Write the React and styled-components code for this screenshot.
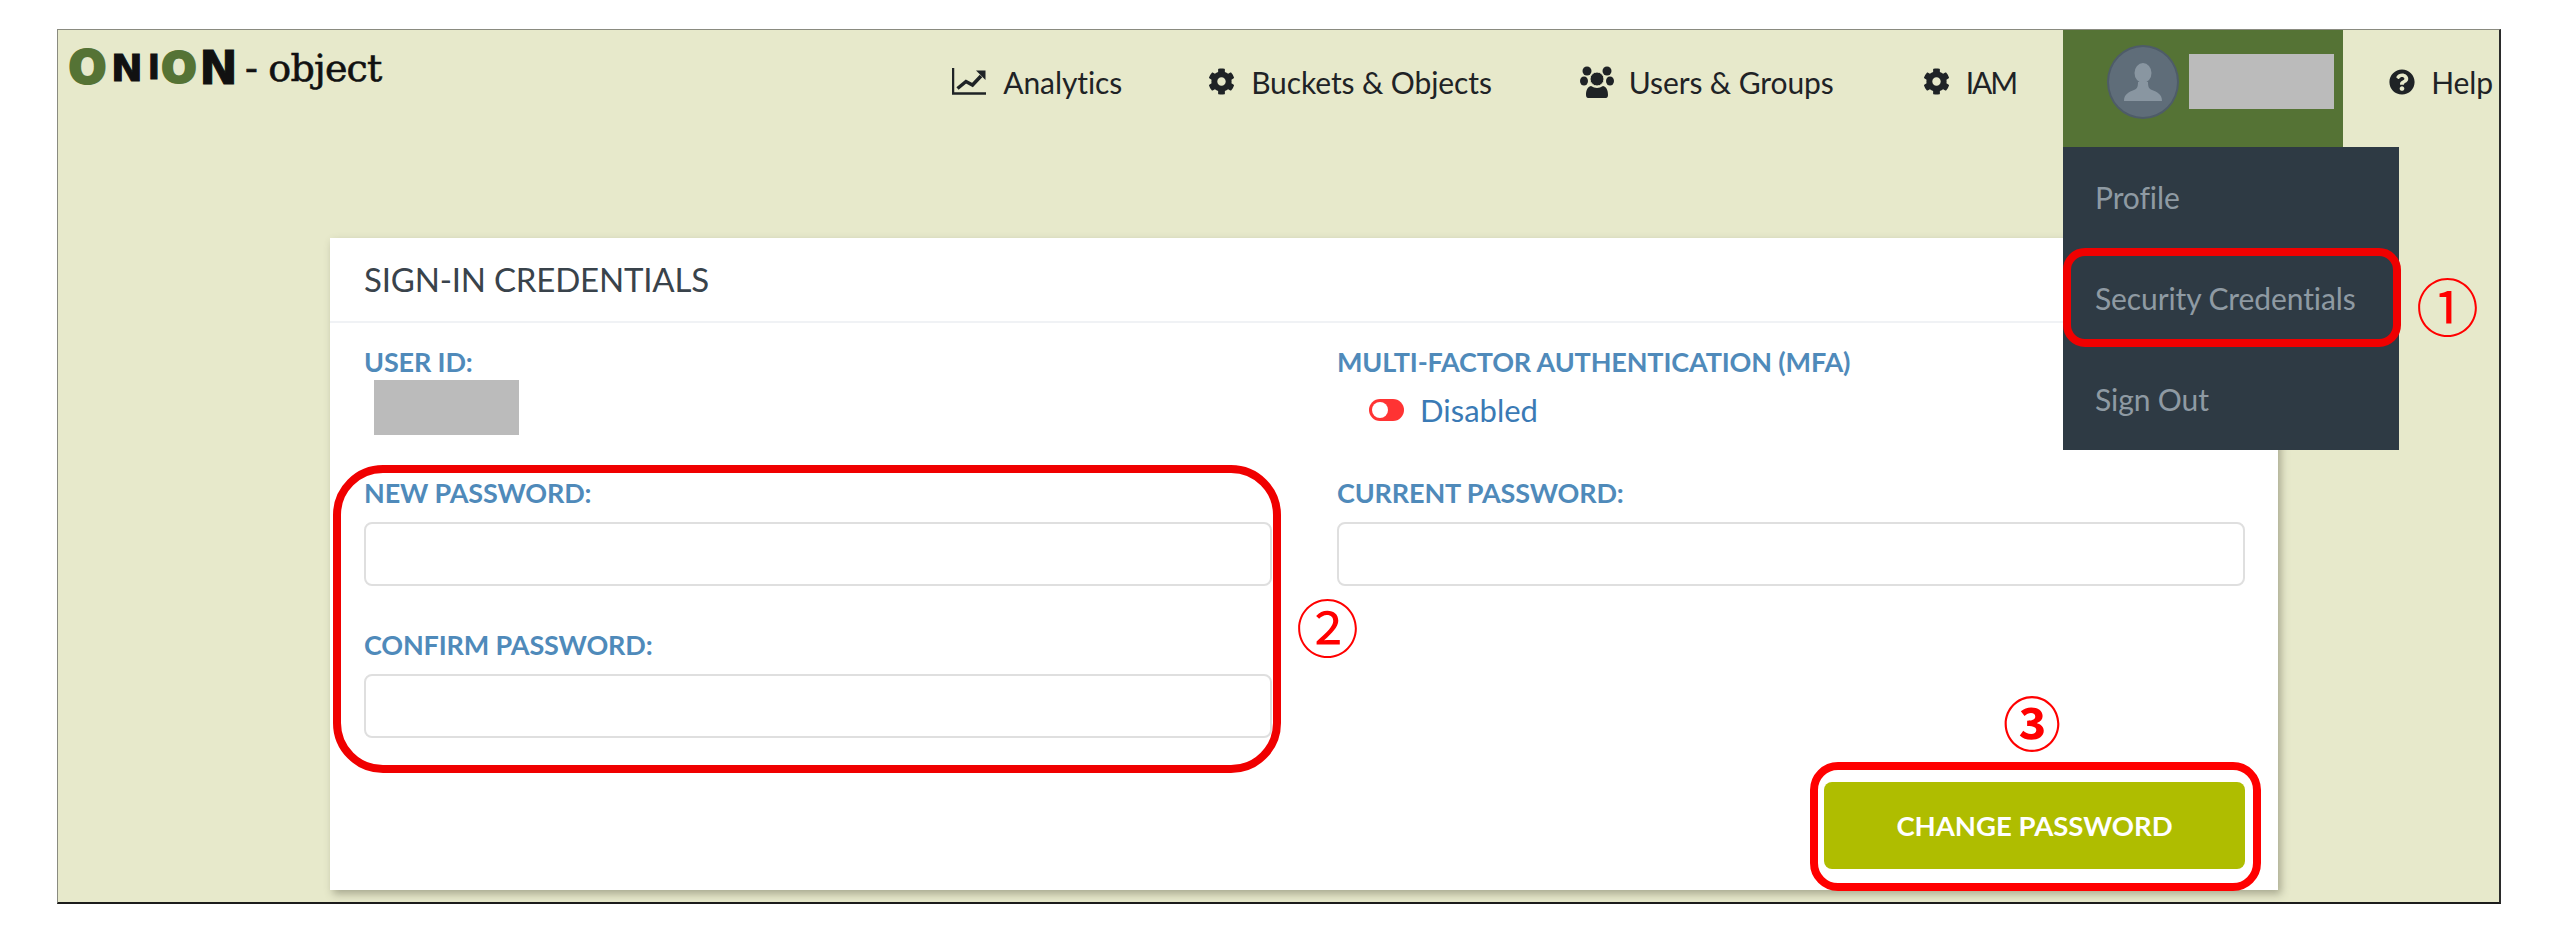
import React from 'react'
import styled, { createGlobalStyle } from 'styled-components'
import { FaCog, FaQuestionCircle } from 'react-icons/fa'

const color = {
  text: '#1f2326',
  paper: '#e7e9cb',
  green: '#557335',
  menu: '#2e3a44',
  menuText: '#8f9aa3',
  label: '#4f8aba',
  link: '#3a7ab5',
  redact: '#bbbbbb',
  red: '#f00000',
  lime: '#afbd00',
}

const GlobalStyle = createGlobalStyle`
  html, body {
    margin: 0;
    background: #ffffff;
    font-family: 'Lato', 'Liberation Sans', sans-serif;
  }
  * {
    box-sizing: border-box;
  }
`

const Frame = styled.div`
  position: relative;
  width: 2444px;
  height: 875px;
  margin: 29px 0 0 57px;
  background: ${color.paper};
  border-style: solid;
  border-width: 1px 2px 2px 1px;
  border-color: #8a8b80 #2b2b2b #1c1c1c #8a8b80;
`

const TopBar = styled.header`
  display: flex;
  align-items: center;
  height: 117px;
`

const Logo = styled.div`
  display: flex;
  align-items: center;
  align-self: flex-start;
  height: 36px;
  margin: 20px 0 0 12px;
  color: #111;
  white-space: nowrap;
`

const LogoLetter = styled.span`
  display: flex;
  justify-content: center;
  width: ${p => p.$w}px;
  margin-right: ${p => p.$gap}px;
  font: 700 ${p => p.$size}px/36px 'DejaVu Sans', sans-serif;
  color: ${p => p.$ring ? color.green : '#111'};
  -webkit-text-stroke: ${p => p.$ring ? 3 : 1}px currentColor;
`

const LogoWord = styled.span`
  font: 400 38px/36px 'DejaVu Serif', serif;
  margin-left: 8px;
  letter-spacing: -0.8px;
  -webkit-text-stroke: 0.6px #111;
`

const Nav = styled.nav`
  display: flex;
  align-items: center;
  align-self: stretch;
  margin-left: auto;
  margin-right: 6px;
`

const NavItem = styled.a`
  display: flex;
  align-items: center;
  gap: ${p => p.$gap || 16}px;
  margin-right: ${p => p.$after ?? 89}px;
  margin-bottom: 14px;
  font-size: 30px;
  letter-spacing: ${p => p.$tight ? -2 : -0.1}px;
  color: ${color.text};
  white-space: nowrap;
`

const UserTab = styled.div`
  display: flex;
  align-items: center;
  align-self: stretch;
  width: 280px;
  margin-right: 46px;
  padding: 0 0 14px 44px;
  background: ${color.green};
`

const Avatar = styled.div`
  display: flex;
  align-items: center;
  justify-content: center;
  width: 72px;
  height: 74px;
  margin-right: 10px;
  border: 2px solid #4e5c68;
  border-radius: 50%;
  background: #5f6d79;
  color: #8996a1;
`

const Redacted = styled.div`
  width: ${p => p.$w}px;
  height: 55px;
  background: ${color.redact};
`

const Menu = styled.ul`
  position: absolute;
  top: 117px;
  left: 2005px;
  width: 336px;
  height: 303px;
  margin: 0;
  padding: 0;
  list-style: none;
  background: ${color.menu};
  z-index: 2;
`

const MenuItem = styled.li`
  display: flex;
  align-items: center;
  height: 101px;
  padding: 0 0 2px 32px;
  font-size: 30px;
  letter-spacing: -0.1px;
  color: ${color.menuText};
`

const Card = styled.section`
  width: 1948px;
  height: 652px;
  margin: 91px 0 0 272px;
  background: #ffffff;
  box-shadow: 3px 4px 8px rgba(90, 90, 70, 0.45);
`

const CardHeader = styled.h2`
  display: flex;
  align-items: center;
  height: 85px;
  margin: 0;
  padding: 0 0 2px 34px;
  border-bottom: 2px solid #f0f2f5;
  font-size: 33px;
  font-weight: 400;
  letter-spacing: -0.2px;
  color: #39434b;
`

const CardBody = styled.div`
  display: grid;
  grid-template-columns: 908px 908px;
  column-gap: 65px;
  padding: 22px 0 0 34px;
`

const Column = styled.div`
  display: flex;
  flex-direction: column;
`

const Label = styled.label`
  display: block;
  height: 34px;
  font-size: 27px;
  line-height: 34px;
  font-weight: 700;
  letter-spacing: -0.15px;
  color: ${color.label};
  white-space: nowrap;
`

const UserIdValue = styled(Redacted)`
  margin: 1px 0 41px 10px;
`

const Status = styled.div`
  display: flex;
  align-items: center;
  gap: 16px;
  height: 55px;
  margin: 1px 0 41px 32px;
  padding-top: 4px;
  font-size: 31px;
  color: ${color.link};
`

const Toggle = styled.span`
  display: block;
  position: relative;
  width: 35px;
  height: 22px;
  border-radius: 11px;
  background: #ff3333;
  &::after {
    content: '';
    position: absolute;
    top: 3px;
    left: 3px;
    width: 16px;
    height: 16px;
    border-radius: 50%;
    background: #ffffff;
  }
`

const Input = styled.input`
  display: block;
  width: 100%;
  height: 64px;
  margin: 12px 0 42px;
  border: 2px solid #dfdfdf;
  border-radius: 8px;
  background: #ffffff;
`

const Actions = styled.div`
  display: flex;
  justify-content: flex-end;
  margin-top: 2px;
  padding-right: 33px;
`

const Button = styled.button`
  width: 421px;
  height: 87px;
  border: 0;
  border-radius: 8px;
  background: ${color.lime};
  color: #ffffff;
  font: 700 27.5px 'Lato', sans-serif;
`

// red annotations drawn over the screenshot
const Ring = styled.div`
  position: absolute;
  top: ${p => p.$top}px;
  left: ${p => p.$left}px;
  width: ${p => p.$w}px;
  height: ${p => p.$h}px;
  border: 8px solid ${p => p.$color || color.red};
  border-radius: ${p => p.$radius}px;
  pointer-events: none;
  z-index: 3;
`

const Marker = styled.span`
  position: absolute;
  top: ${p => p.$top}px;
  left: ${p => p.$left}px;
  width: ${p => p.$w}px;
  height: 62px;
  font: ${p => p.$bold ? 700 : 400} ${p => p.$bold ? 58 : 63}px/62px 'Noto Sans CJK JP', sans-serif;
  color: #ff0000;
  text-align: center;
  z-index: 3;
`

const TrendIcon = () => (
  <svg width="34" height="27" viewBox="0 0 34 27">
    <path d="M1 0v25.5h33" fill="none" stroke="currentColor" strokeWidth="2.5" />
    <path d="M5.5 20.5l8.5-7 6.5 3.5L29 8" fill="none" stroke="currentColor" strokeWidth="3.5" />
    <path d="M24 2.5h9.5v9.5z" fill="currentColor" />
  </svg>
)

const UsersIcon = () => (
  <svg width="34" height="32" viewBox="0 0 34 32" fill="currentColor">
    <circle cx="7" cy="5" r="4.5" />
    <circle cx="27" cy="5" r="4.5" />
    <ellipse cx="4" cy="15" rx="4" ry="4.5" />
    <ellipse cx="30" cy="15" rx="4" ry="4.5" />
    <circle cx="17" cy="13" r="7" stroke={color.paper} strokeWidth="1" />
    <path d="M8 32c-1 0-2-1-2-3 0-4 1-8 5-9 2 1 4 2 6 2s4-1 6-2c4 1 5 5 5 9 0 2-1 3-2 3z" />
  </svg>
)

const BustIcon = () => (
  <svg width="38" height="38" viewBox="0 0 38 38" fill="currentColor">
    <ellipse cx="19" cy="10" rx="8.5" ry="10" />
    <path d="M0 38c0-7 5-9 10-11 3-1 4-3 4-8h10c0 5 1 7 4 8 5 2 10 4 10 11z" />
  </svg>
)

function App() {
  return (
    <>
      <GlobalStyle />
      <Frame>
        <TopBar>
          <Logo>
            <LogoLetter $ring $w={35} $gap={7} $size={44}>O</LogoLetter>
            <LogoLetter $w={30} $gap={8} $size={38}>N</LogoLetter>
            <LogoLetter $w={8} $gap={5} $size={33}>I</LogoLetter>
            <LogoLetter $ring $w={32} $gap={5} $size={41}>O</LogoLetter>
            <LogoLetter $w={37} $gap={0} $size={46}>N</LogoLetter>
            <LogoWord>- object</LogoWord>
          </Logo>
          <Nav>
            <NavItem $gap={17} $after={86}><TrendIcon />Analytics</NavItem>
            <NavItem $after={88}><FaCog size={27} />Buckets &amp; Objects</NavItem>
            <NavItem $gap={15}><UsersIcon />Users &amp; Groups</NavItem>
            <NavItem $after={47} $tight><FaCog size={27} />IAM</NavItem>
            <UserTab>
              <Avatar><BustIcon /></Avatar>
              <Redacted $w={145} />
            </UserTab>
            <NavItem $after={0}><FaQuestionCircle size={26} />Help</NavItem>
          </Nav>
        </TopBar>
        <Menu>
          <MenuItem>Profile</MenuItem>
          <MenuItem>Security Credentials</MenuItem>
          <MenuItem>Sign Out</MenuItem>
        </Menu>
        <Card>
          <CardHeader>SIGN-IN CREDENTIALS</CardHeader>
          <CardBody>
            <Column>
              <Label>USER ID:</Label>
              <UserIdValue $w={145} />
              <Label>NEW PASSWORD:</Label>
              <Input type="password" />
              <Label>CONFIRM PASSWORD:</Label>
              <Input type="password" />
            </Column>
            <Column>
              <Label>MULTI-FACTOR AUTHENTICATION (MFA)</Label>
              <Status><Toggle />Disabled</Status>
              <Label>CURRENT PASSWORD:</Label>
              <Input type="password" />
            </Column>
          </CardBody>
          <Actions>
            <Button>CHANGE PASSWORD</Button>
          </Actions>
        </Card>
        <Ring $top={218} $left={2005} $w={338} $h={99} $radius={22} />
        <Marker $top={243} $left={2358} $w={60}>①</Marker>
        <Ring $top={435} $left={275} $w={948} $h={308} $radius={50} />
        <Marker $top={564} $left={1238} $w={59}>②</Marker>
        <Ring $top={732} $left={1752} $w={451} $h={129} $radius={28} $color="#ff0000" />
        <Marker $bold $top={660} $left={1945} $w={56}>③</Marker>
      </Frame>
    </>
  )
}

export default App
